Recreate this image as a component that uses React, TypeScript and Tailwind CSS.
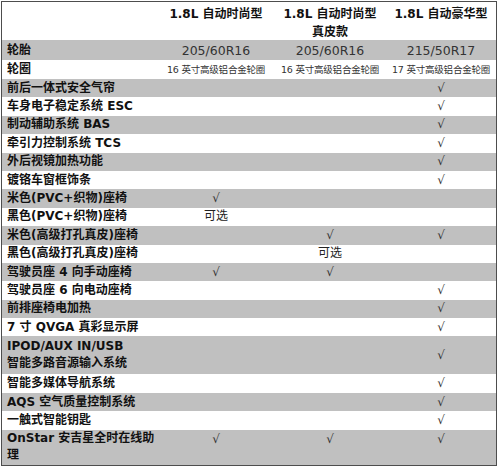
import React from "react";

type Row = {
  label: string[];
  cells: string[];
  h: string;
  bg: "gray" | "white";
  checkTop?: boolean;
};

const V = "√";

// spec rows, top to bottom
const rows: Row[] = [
  { label: ["轮胎"], cells: ["205/60R16", "205/60R16", "215/50R17"], h: "h-[20px]", bg: "gray" },
  {
    label: ["轮圈"],
    cells: ["16 英寸高级铝合金轮圈", "16 英寸高级铝合金轮圈", "17 英寸高级铝合金轮圈"],
    h: "h-[19px]",
    bg: "white",
  },
  { label: ["前后一体式安全气帘"], cells: ["", "", V], h: "h-[18.4px]", bg: "gray" },
  { label: ["车身电子稳定系统 ESC"], cells: ["", "", V], h: "h-[18.4px]", bg: "white" },
  { label: ["制动辅助系统 BAS"], cells: ["", "", V], h: "h-[18.4px]", bg: "gray" },
  { label: ["牵引力控制系统 TCS"], cells: ["", "", V], h: "h-[18.4px]", bg: "white" },
  { label: ["外后视镜加热功能"], cells: ["", "", V], h: "h-[18.4px]", bg: "gray" },
  { label: ["镀铬车窗框饰条"], cells: ["", "", V], h: "h-[18.4px]", bg: "white" },
  { label: ["米色(PVC+织物)座椅"], cells: [V, "", ""], h: "h-[18.4px]", bg: "gray" },
  { label: ["黑色(PVC+织物)座椅"], cells: ["可选", "", ""], h: "h-[18.4px]", bg: "white" },
  { label: ["米色(高级打孔真皮)座椅"], cells: ["", V, V], h: "h-[18.4px]", bg: "gray" },
  { label: ["黑色(高级打孔真皮)座椅"], cells: ["", "可选", ""], h: "h-[18.4px]", bg: "white" },
  { label: ["驾驶员座 4 向手动座椅"], cells: [V, V, ""], h: "h-[18.4px]", bg: "gray" },
  { label: ["驾驶员座 6 向电动座椅"], cells: ["", "", V], h: "h-[18.4px]", bg: "white" },
  { label: ["前排座椅电加热"], cells: ["", "", V], h: "h-[18.4px]", bg: "gray" },
  { label: ["7 寸 QVGA 真彩显示屏"], cells: ["", "", V], h: "h-[18.4px]", bg: "white" },
  {
    label: ["IPOD/AUX IN/USB", "智能多路音源输入系统"],
    cells: ["", "", V],
    h: "h-[38px]",
    bg: "gray",
  },
  { label: ["智能多媒体导航系统"], cells: ["", "", V], h: "h-[18.4px]", bg: "white" },
  { label: ["AQS 空气质量控制系统"], cells: ["", "", V], h: "h-[18.4px]", bg: "gray" },
  { label: ["一触式智能钥匙"], cells: ["", "", V], h: "h-[18.4px]", bg: "white" },
  {
    label: ["OnStar 安吉星全时在线助", "理"],
    cells: [V, V, V],
    h: "h-[35px]",
    bg: "gray",
    checkTop: true,
  },
];

const font = "font-['DejaVu_Sans','Noto_Sans_CJK_SC',sans-serif]";
const cols = "grid grid-cols-[156px_116px_112px_1fr]";

function Cell({ value, top }: { value: string; top?: boolean }) {
  let cls = "text-[12px] text-[#222]";
  if (value === V) cls = "text-[12px] text-[#333]";
  else if (value.includes("英寸")) cls = "text-[9.5px] text-[#333] tracking-[-0.2px]";
  else if (value.includes("R1")) cls = "text-[12.5px] text-[#333]";
  return (
    <div
      className={`flex justify-center ${top ? "items-start pt-[1px]" : "items-center"} ${cls} leading-[17px] whitespace-nowrap`}
    >
      {value}
    </div>
  );
}

export default function App() {
  return (
    <div className={`p-px bg-white ${font}`}>
      <div className="w-[496px] border border-[#4d4d4d] bg-white">
        {/* header */}
        <div className={`${cols} h-[38px] text-[12px] font-bold text-[#111] leading-[18px]`}>
          <div />
          <div className="pt-[3px] text-center">1.8L 自动时尚型</div>
          <div className="pt-[3px] text-center">
            1.8L 自动时尚型
            <br />
            真皮款
          </div>
          <div className="pt-[3px] text-center">1.8L 自动豪华型</div>
        </div>

        {rows.map((r) => (
          <div
            key={r.label.join("")}
            className={`${cols} ${r.h} ${r.bg === "gray" ? "bg-[#c0c0c0]" : "bg-white"}`}
          >
            <div className="flex flex-col justify-center pl-[5px] text-[12px] font-bold text-[#111] leading-[17px] whitespace-nowrap">
              {r.label.map((l) => (
                <span key={l}>{l}</span>
              ))}
            </div>
            {r.cells.map((c, i) => (
              <Cell key={i} value={c} top={r.checkTop} />
            ))}
          </div>
        ))}
      </div>
    </div>
  );
}
